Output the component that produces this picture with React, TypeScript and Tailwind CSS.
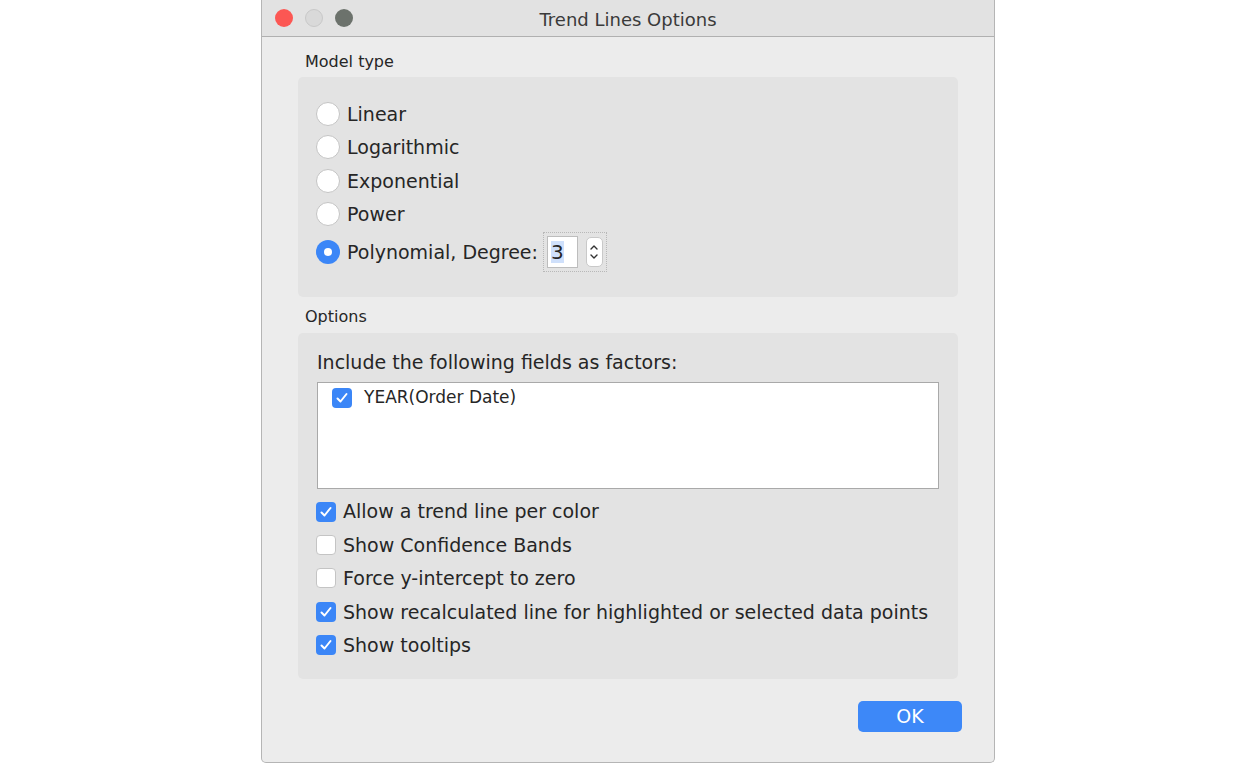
import React from 'react';

const font = { fontFamily: '"DejaVu Sans", "Noto Sans", sans-serif' };

const Radio: React.FC<{ checked?: boolean }> = ({ checked }) =>
  checked ? (
    <span className="w-[24px] h-[24px] rounded-full bg-[#3b86f7] flex items-center justify-center shrink-0">
      <span className="w-[8px] h-[8px] rounded-full bg-white" />
    </span>
  ) : (
    <span className="w-[24px] h-[24px] rounded-full bg-white border border-[#c4c4c4] shrink-0" />
  );

const Check: React.FC<{ checked?: boolean }> = ({ checked }) =>
  checked ? (
    <span className="w-[20px] h-[20px] rounded-[4px] bg-[#3b86f7] flex items-center justify-center shrink-0">
      <svg width="14" height="14" viewBox="0 0 14 14" fill="none">
        <path d="M2.5 7.5 L5.5 10.5 L11.5 3" stroke="white" strokeWidth="2" strokeLinecap="round" strokeLinejoin="round" />
      </svg>
    </span>
  ) : (
    <span className="w-[20px] h-[20px] rounded-[4px] bg-white border border-[#c4c4c4] shrink-0" />
  );

const models = ['Linear', 'Logarithmic', 'Exponential', 'Power'];

const options = [
  { label: 'Allow a trend line per color', checked: true },
  { label: 'Show Confidence Bands', checked: false },
  { label: 'Force y-intercept to zero', checked: false },
  { label: 'Show recalculated line for highlighted or selected data points', checked: true },
  { label: 'Show tooltips', checked: true },
];

const App: React.FC = () => {
  return (
    <div className="w-[1255px] h-[763px] bg-white flex justify-start overflow-hidden" style={font}>
      <div className="ml-[261px] w-[734px] h-[763px] bg-[#ececec] border-l border-r border-b border-[#b5b5b5] rounded-b-[5px] flex flex-col text-[#262626]">
        {/* title bar */}
        <div className="h-[37px] bg-[#e2e2e2] border-b border-[#b0b0b0] flex items-center relative shrink-0">
          <div className="flex items-center gap-[12px] pl-[13px]">
            <span className="w-[18px] h-[18px] rounded-full bg-[#fc5753]" />
            <span className="w-[18px] h-[18px] rounded-full bg-[#d9d9d9] border border-[#c8c8c8]" />
            <span className="w-[18px] h-[18px] rounded-full bg-[#6c726c]" />
          </div>
          <div className="absolute inset-0 pt-[3px] flex items-center justify-center text-[18px] text-[#3a3a3a]">
            Trend Lines Options
          </div>
        </div>

        <div className="flex flex-col px-[36px] pt-[12px]">
          <div className="text-[16px] pl-[7px] h-[26px] leading-[26px]">Model type</div>
          <div className="mt-[2px] h-[220px] bg-[#e3e3e3] rounded-[5px] pl-[18px] pt-[20px] flex flex-col">
            {models.map((m) => (
              <div key={m} className="flex items-center gap-[7px] h-[33.5px] text-[19px]">
                <Radio />
                <span>{m}</span>
              </div>
            ))}
            <div className="flex items-center gap-[7px] h-[42px] text-[19px]">
              <Radio checked />
              <span>Polynomial, Degree:</span>
              <div className="-ml-[2px] flex items-center gap-[8px] border border-dotted border-[#b8b8b8] p-[3px]">
                <div className="w-[31px] h-[32px] bg-white border border-[#bdbdbd] flex items-center pl-[3px] text-[20px]">
                  <span className="bg-[#cfe0fb] leading-[22px]">3</span>
                </div>
                <div className="w-[17px] h-[30px] bg-white rounded-[5px] border border-[#c9c9c9] flex flex-col items-center justify-center">
                  <svg width="10" height="22" viewBox="0 0 10 22" fill="none">
                    <path d="M2 8 L5 5 L8 8" stroke="#333" strokeWidth="1.4" strokeLinecap="round" strokeLinejoin="round" />
                    <path d="M2 14 L5 17 L8 14" stroke="#333" strokeWidth="1.4" strokeLinecap="round" strokeLinejoin="round" />
                  </svg>
                </div>
              </div>
            </div>
          </div>

          <div className="mt-[7px] text-[16px] pl-[7px] h-[26px] leading-[26px]">Options</div>
          <div className="mt-[3px] h-[346px] bg-[#e3e3e3] rounded-[5px] px-[19px] pt-[17px] flex flex-col">
            <div className="text-[19px] h-[24px] leading-[24px]">Include the following fields as factors:</div>
            <div className="mt-[8px] h-[107px] bg-white border border-[#a9a9a9] pl-[14px] pt-[4px]">
              <div className="flex items-center gap-[12px] h-[22px] text-[17px]">
                <Check checked />
                <span>YEAR(Order Date)</span>
              </div>
            </div>
            <div className="mt-[6px] flex flex-col">
              {options.map((o) => (
                <div key={o.label} className="flex items-center gap-[7px] h-[33.4px] text-[19px] -ml-[1px]">
                  <Check checked={o.checked} />
                  <span>{o.label}</span>
                </div>
              ))}
            </div>
          </div>

          <div className="mt-[22px] flex justify-end">
            <button className="w-[104px] h-[31px] mr-[-4px] rounded-[5px] bg-[#3d88f8] text-white text-[19px] leading-[31px]">
              OK
            </button>
          </div>
        </div>
      </div>
    </div>
  );
};

export default App;
